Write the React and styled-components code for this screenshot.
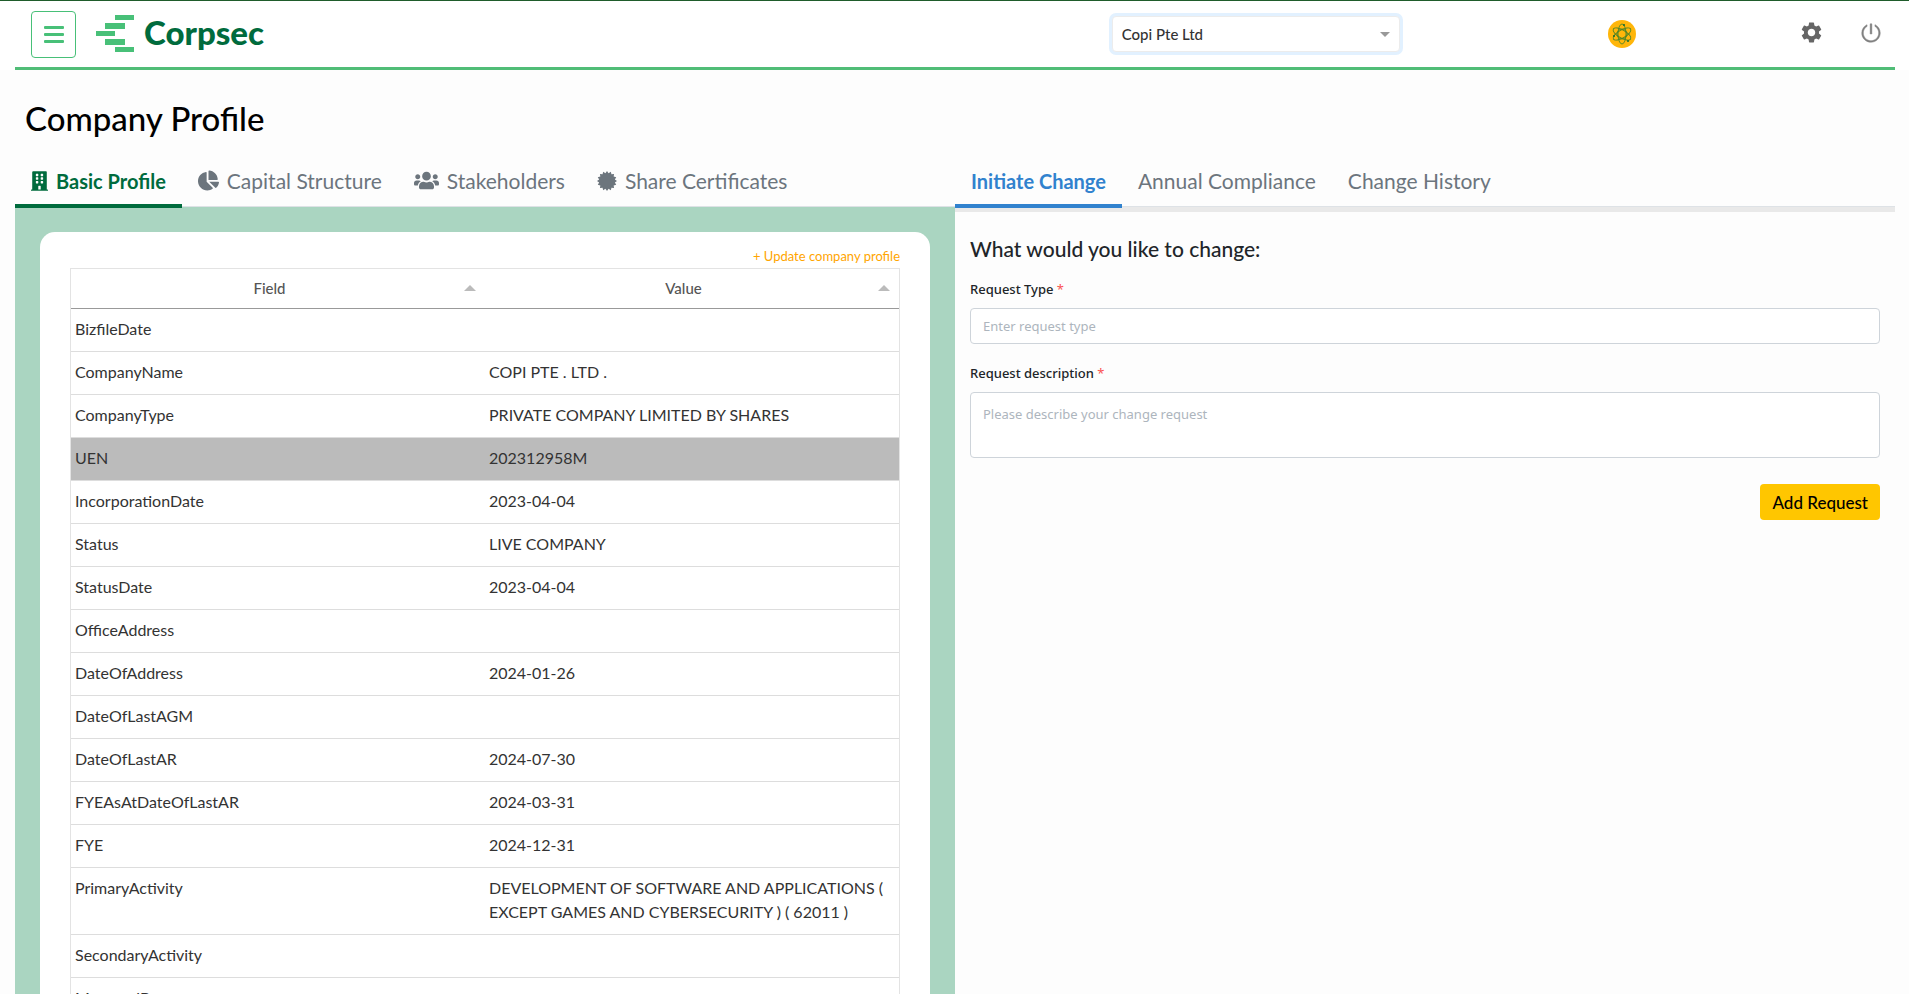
import { useState } from 'react';
import styled, { createGlobalStyle } from 'styled-components';
import { FaBuilding, FaChartPie, FaUsers } from 'react-icons/fa';
import { MdSettings } from 'react-icons/md';
import { AiOutlinePoweroff } from 'react-icons/ai';

const rows = [
  ['BizfileDate', ''],
  ['CompanyName', 'COPI PTE . LTD .'],
  ['CompanyType', 'PRIVATE COMPANY LIMITED BY SHARES'],
  ['UEN', '202312958M'],
  ['IncorporationDate', '2023-04-04'],
  ['Status', 'LIVE COMPANY'],
  ['StatusDate', '2023-04-04'],
  ['OfficeAddress', ''],
  ['DateOfAddress', '2024-01-26'],
  ['DateOfLastAGM', ''],
  ['DateOfLastAR', '2024-07-30'],
  ['FYEAsAtDateOfLastAR', '2024-03-31'],
  ['FYE', '2024-12-31'],
  ['PrimaryActivity', 'DEVELOPMENT OF SOFTWARE AND APPLICATIONS ( EXCEPT GAMES AND CYBERSECURITY ) ( 62011 )'],
  ['SecondaryActivity', ''],
  ['ManagedBy', ''],
];

// 16 pointed seal
const sealPoints = Array.from({ length: 32 }, (_, i) => {
  const r = i % 2 ? 8 : 10;
  const a = (i * Math.PI) / 16;
  return `${(10 + r * Math.sin(a)).toFixed(2)},${(10 - r * Math.cos(a)).toFixed(2)}`;
}).join(' ');

function SealIcon() {
  return (
    <svg width="20" height="20" viewBox="0 0 20 20" fill="currentColor">
      <polygon points={sealPoints} />
    </svg>
  );
}

function LogoMark() {
  return (
    <svg width="38" height="38" viewBox="0 0 38 38" fill="#48c078">
      <rect x="19" y="0" width="19" height="5" />
      <rect x="9" y="8" width="20" height="6" />
      <rect x="0" y="16" width="19" height="5" />
      <rect x="9" y="24" width="20" height="6" />
      <rect x="19" y="32" width="19" height="5" />
    </svg>
  );
}

function AvatarIcon() {
  return (
    <svg width="28" height="28" viewBox="0 0 28 28">
      <circle cx="14" cy="14" r="14" fill="#ffb60a" />
      <g fill="none" stroke="#4d8427" strokeWidth="0.9">
        <circle cx="14" cy="14" r="5" />
        <ellipse cx="14" cy="14" rx="4" ry="10" />
        <ellipse cx="14" cy="14" rx="4" ry="10" transform="rotate(60 14 14)" />
        <ellipse cx="14" cy="14" rx="4" ry="10" transform="rotate(120 14 14)" />
      </g>
      <g fill="#0f6b36">
        <circle cx="16" cy="5" r="1" />
        <circle cx="6" cy="16" r="1" />
        <circle cx="20" cy="21" r="1" />
      </g>
    </svg>
  );
}

const BuildingIcon = styled(FaBuilding)`
  width: 17px;
  height: 20px;
`

const profileTabs = [
  ['Basic Profile', <BuildingIcon />],
  ['Capital Structure', <FaChartPie size={21} />],
  ['Stakeholders', <FaUsers size={25} />],
  ['Share Certificates', <SealIcon />],
];
const changeTabs = ['Initiate Change', 'Annual Compliance', 'Change History'];

function App() {
  const [profileTab, setProfileTab] = useState('Basic Profile');
  const [changeTab, setChangeTab] = useState('Initiate Change');

  return (
    <Page>
      <GlobalStyle />
      <Header>
        <HeaderRow>
          <Brand>
            <MenuBtn aria-label="Menu"><span /><span /><span /></MenuBtn>
            <LogoMark />
            <BrandName>Corpsec</BrandName>
          </Brand>
          <SelectWrapper>
            <CompanySelect aria-label="Company" defaultValue="copi">
              <option value="copi">Copi Pte Ltd</option>
            </CompanySelect>
            <SelectArrow />
          </SelectWrapper>
          <AvatarBtn aria-label="Account"><AvatarIcon /></AvatarBtn>
          <Actions>
            <IconBtn aria-label="Settings"><MdSettings size={25} color="#666" /></IconBtn>
            <IconBtn aria-label="Log out">
              <AiOutlinePoweroff size={22} color="#808080" stroke="#808080" strokeWidth={20} />
            </IconBtn>
          </Actions>
        </HeaderRow>
      </Header>

      <Title>Company Profile</Title>

      <Columns>
        <section>
          <Tabs>
            {profileTabs.map(([name, icon]) => (
              <Tab key={name} $active={name === profileTab} $color="#006b3d" onClick={() => setProfileTab(name)}>
                {icon}
                {name}
              </Tab>
            ))}
          </Tabs>
          <GreenPanel>
            <Card>
              <UpdateLink href="#update">+ Update company profile</UpdateLink>
              <Table>
                <thead>
                  <tr>
                    <Th><ThInner>Field<SortArrow /></ThInner></Th>
                    <Th><ThInner>Value<SortArrow /></ThInner></Th>
                  </tr>
                </thead>
                <tbody>
                  {rows.map(([field, value]) => (
                    <Tr key={field} $selected={field === 'UEN'}>
                      <Td>{field}</Td>
                      <Td>{value}</Td>
                    </Tr>
                  ))}
                </tbody>
              </Table>
            </Card>
          </GreenPanel>
        </section>

        <section>
          <Tabs>
            {changeTabs.map((name) => (
              <Tab key={name} $active={name === changeTab} $color="#3182ce" onClick={() => setChangeTab(name)}>
                {name}
              </Tab>
            ))}
          </Tabs>
          <Strip />
          <Form onSubmit={(e) => e.preventDefault()}>
            <FormTitle>What would you like to change:</FormTitle>
            <Label htmlFor="type">Request Type <Star>*</Star></Label>
            <Input id="type" placeholder="Enter request type" />
            <Label htmlFor="description">Request description <Star>*</Star></Label>
            <TextArea id="description" placeholder="Please describe your change request" />
            <AddBtn type="submit">Add Request</AddBtn>
          </Form>
        </section>
      </Columns>
    </Page>
  );
}

const GlobalStyle = createGlobalStyle`
  * {
    box-sizing: border-box;
  }
  html {
    height: 100%;
    overflow: hidden;
  }
  body {
    margin: 0;
    background: #fdfdfd;
    color: #212529;
    font-family: Lato, 'Liberation Sans', sans-serif;
  }
  button {
    font-family: inherit;
    cursor: pointer;
  }
`

const Page = styled.div`
  height: 100vh;
  overflow: hidden;
  border-top: 1px solid #1f5c2b;
`

const Header = styled.header`
  background: white;
  padding: 0 14px 0 15px;
`

const HeaderRow = styled.div`
  display: grid;
  grid-template-columns: 7fr 3fr 1fr 1fr;
  align-items: center;
  height: 69px;
  border-bottom: 3px solid #50bd77;
`

const Brand = styled.div`
  display: flex;
  align-items: center;
  padding-left: 16px;
`

const MenuBtn = styled.button`
  display: flex;
  flex-direction: column;
  align-items: center;
  justify-content: center;
  gap: 4px;
  width: 45px;
  height: 47px;
  margin-right: 20px;
  border: 1px solid #48c078;
  border-radius: 4px;
  background: white;

  span {
    width: 20px;
    height: 3px;
    border-radius: 1px;
    background: #48c078;
  }
`

const BrandName = styled.div`
  margin-left: 10px;
  padding-bottom: 5px;
  font-size: 33px;
  line-height: 40px;
  font-weight: 900;
  color: #006b3d;
`

const SelectWrapper = styled.div`
  position: relative;
  width: 288px;
`

const CompanySelect = styled.select`
  appearance: none;
  display: block;
  width: 100%;
  height: 36px;
  padding: 0 9px 1px;
  border: 1px solid #ececec;
  border-radius: 4px;
  box-shadow: 0 0 0 3px #e2f1ff;
  background: white;
  color: #333;
  font-family: inherit;
  font-size: 15px;
  font-weight: 500;
`

const SelectArrow = styled.span`
  position: absolute;
  top: 16px;
  right: 10px;
  border: 5px solid transparent;
  border-top-color: #999;
  border-bottom: 0;
  pointer-events: none;
`

const IconBtn = styled.button`
  display: flex;
  padding: 0;
  border: 0;
  background: none;
`

const AvatarBtn = styled(IconBtn)`
  padding-left: 26px;
`

const Actions = styled.div`
  display: flex;
  align-items: center;
  justify-content: flex-end;
  gap: 36px;
  padding: 0 13px 3px 0;
`

const Title = styled.h1`
  margin: 28px 0 22px;
  padding-left: 25px;
  font-size: 33px;
  line-height: 40px;
  font-weight: 500;
  color: black;
`

const Columns = styled.main`
  display: grid;
  grid-template-columns: 1fr 1fr;
  padding: 0 14px 0 15px;
`

const Tabs = styled.nav`
  display: flex;
  height: 47px;
  border-bottom: 1px solid #dee2e6;
`

const Tab = styled.button`
  display: flex;
  align-items: center;
  gap: 8px;
  height: 48px;
  padding: 0 16px 3px;
  border: 0;
  border-bottom: 4px solid ${(p) => (p.$active ? p.$color : 'transparent')};
  background: none;
  color: ${(p) => (p.$active ? p.$color : '#6c757d')};
  font-size: ${(p) => (p.$active ? '20px' : '21px')};
  font-weight: ${(p) => (p.$active ? 700 : 400)};
`

const GreenPanel = styled.div`
  padding: 25px 25px 0;
  background: #aad5c1;
`

const Card = styled.div`
  display: flex;
  flex-direction: column;
  padding: 15px 30px;
  border-radius: 15px;
  background: white;
`

const UpdateLink = styled.a`
  align-self: flex-end;
  padding-bottom: 2px;
  font-size: 13px;
  line-height: 19px;
  color: orange;
  text-decoration: none;
`

const Table = styled.table`
  width: 100%;
  table-layout: fixed;
  border-spacing: 0;
  border: 1px solid #e3e3e3;
  color: #333;
`

const Th = styled.th`
  height: 40px;
  padding: 0 21px 1px 4px;
  border-bottom: 1px solid #999;
  font-size: 15px;
  font-weight: 500;
  color: #555;
`

const ThInner = styled.div`
  display: flex;
  align-items: center;
  justify-content: center;
  position: relative;
`

const SortArrow = styled.span`
  position: absolute;
  right: -12px;
  border: 6px solid transparent;
  border-bottom-color: #bbb;
  border-top: 0;
`

const Tr = styled.tr`
  background: ${(p) => (p.$selected ? '#bbb' : 'white')};
`

const Td = styled.td`
  height: 43px;
  padding: 8px 4px 10px;
  border-bottom: 1px solid #ddd;
  font-size: 16px;
  line-height: 24px;
  vertical-align: top;
`

const Strip = styled.div`
  height: 5px;
  background: #e9e9e9;
`

const Form = styled.form`
  display: flex;
  flex-direction: column;
  padding: 24px 15px;
  font-family: 'Noto Sans', 'Open Sans', sans-serif;
`

const FormTitle = styled.h2`
  margin: 0 0 16px;
  font-family: Lato, 'Liberation Sans', sans-serif;
  font-size: 21px;
  line-height: 26px;
  font-weight: 500;
`

const Label = styled.label`
  margin-bottom: 8px;
  font-size: 13px;
  line-height: 22px;
  font-weight: 500;
`

const Star = styled.span`
  color: #fa5252;
  font-weight: 400;
`

const Input = styled.input`
  height: 36px;
  margin-bottom: 18px;
  padding: 0 12px;
  border: 1px solid #ced4da;
  border-radius: 4px;
  background: white;
  font-family: inherit;
  font-size: 13px;

  &::placeholder {
    color: #adb5bd;
  }
`

const TextArea = styled.textarea`
  height: 66px;
  padding: 10px 12px;
  border: 1px solid #ced4da;
  border-radius: 4px;
  background: white;
  font-family: inherit;
  font-size: 13px;
  line-height: 22px;
  resize: none;

  &::placeholder {
    color: #adb5bd;
  }
`

const AddBtn = styled.button`
  align-self: flex-end;
  height: 36px;
  margin-top: 26px;
  padding: 0 12px;
  border: 0;
  border-radius: 4px;
  background: #ffc600;
  color: black;
  font-family: Lato, 'Liberation Sans', sans-serif;
  font-size: 17px;
  font-weight: 500;
`

export default App;
